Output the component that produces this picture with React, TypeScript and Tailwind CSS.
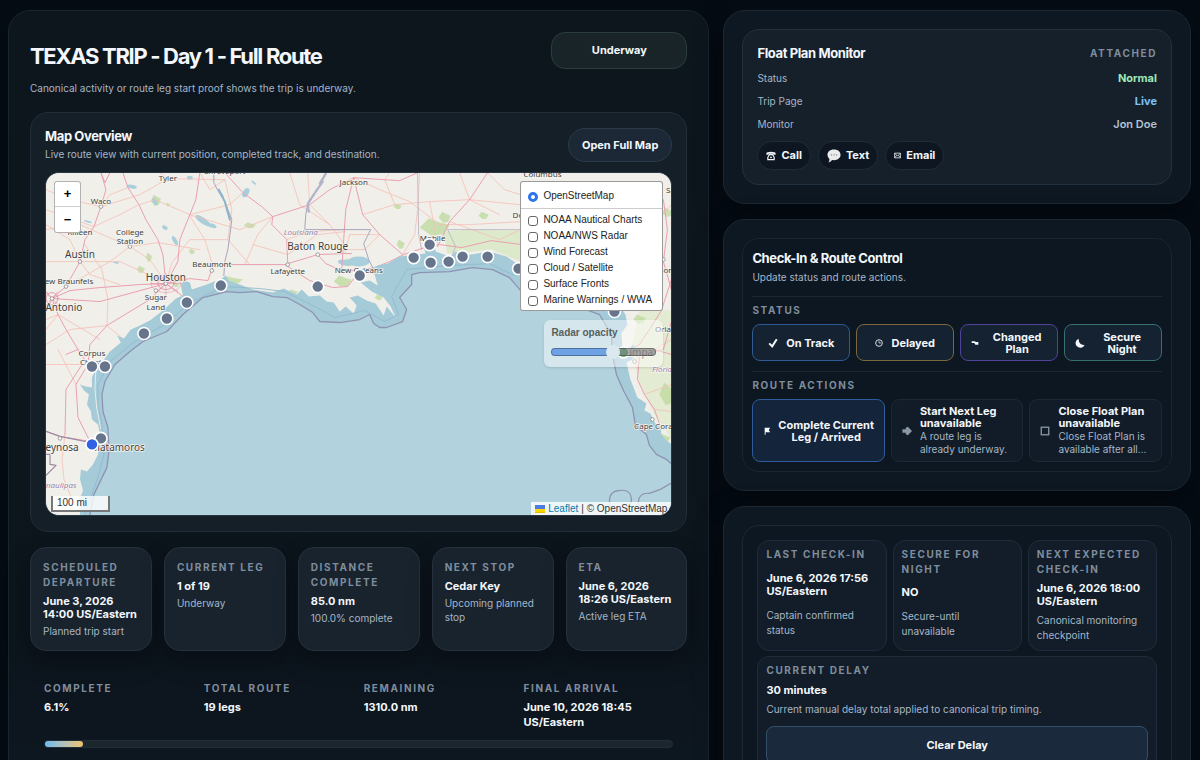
import React from "react";

const LABEL = "text-[10px] leading-[15px] font-bold uppercase tracking-[0.16em] text-[#7f8d9d]";
const MUTED = "text-[10px] text-[#a6b6c7]";

const stops: [number, number][] = [
  [430, 245], [414, 258], [431, 263], [449, 262], [463, 257], [488, 257], [519, 269], [615, 312],
  [360, 276], [318, 287], [221, 286], [187, 303], [167, 319], [144, 334], [105, 367], [92, 367], [101, 439],
];

type MapLabel = { t: string; x: number; y: number; s?: number; c?: string; i?: boolean };

const labels: MapLabel[] = [
  { t: "Tyler", x: 168, y: 181 },
  { t: "Shreveport", x: 225, y: 174 },
  { t: "Jackson", x: 354, y: 185 },
  { t: "Columbus", x: 543, y: 177 },
  { t: "Waco", x: 101, y: 204 },
  { t: "Killeen", x: 80, y: 235 },
  { t: "College", x: 130, y: 235 },
  { t: "Station", x: 130, y: 244 },
  { t: "Austin", x: 80, y: 258, s: 9 },
  { t: "New Braunfels", x: 66, y: 284 },
  { t: "San Antonio", x: 54, y: 311, s: 9 },
  { t: "Houston", x: 166, y: 281, s: 9 },
  { t: "Sugar", x: 156, y: 300 },
  { t: "Land", x: 156, y: 310 },
  { t: "Beaumont", x: 212, y: 267 },
  { t: "Louisiana", x: 301, y: 235, c: "#9a86ad", i: true },
  { t: "Baton Rouge", x: 318, y: 250, s: 9 },
  { t: "Lafayette", x: 288, y: 274 },
  { t: "New Orleans", x: 359, y: 273 },
  { t: "Mobile", x: 433, y: 241 },
  { t: "Dothan", x: 527, y: 218 },
  { t: "Savannah", x: 685, y: 193 },
  { t: "Jacksonville", x: 667, y: 273 },
  { t: "Orlando", x: 671, y: 332 },
  { t: "Tampa", x: 638, y: 357, s: 9 },
  { t: "Florida", x: 665, y: 373, c: "#9a86ad", i: true },
  { t: "Cape Coral", x: 655, y: 430 },
  { t: "Corpus", x: 92, y: 357 },
  { t: "Christi", x: 92, y: 366 },
  { t: "Reynosa", x: 59, y: 452, s: 9 },
  { t: "Matamoros", x: 118, y: 452, s: 9 },
  { t: "Tamaulipas", x: 56, y: 489, c: "#9a86ad", i: true },
];

const mainRoads = [
  "M101 173 L105 183 L110 173", "M123 173 L128 188 L139 205 L146 220 L158 240 L163 255 L166 283",
  "M101 173 L106 190 L101 207 L94 227 L85 240 L80 262 L66 287 L52 299",
  "M46 292 L52 299 L70 291 L100 288 L140 285 L166 284 L190 279 L208 281 L214 265 L245 265 L285 265 L318 255 L345 254 L352 254",
  "M285 265 L310 281 L333 288 L348 287 L358 274",
  "M318 255 L326 264 L342 271 L358 271 L375 268 L390 262 L404 255 L425 248 L440 245 L462 248 L492 241 L522 245",
  "M52 299 L58 315 L66 330 L78 350 L88 365", "M52 299 L46 312", "M166 284 L150 300 L130 312 L107 326 L90 345 L88 365",
  "M166 284 L178 262 L180 240 L190 215 L196 200 L200 173",
  "M273 217 L272 225 L287 240 L288 265", "M225 173 L243 193 L262 207 L273 217 L310 205 L330 190 L354 178 L400 181 L418 173",
  "M354 178 L346 210 L344 240 L342 271", "M354 178 L363 215 L380 235 L403 255", "M438 247 L450 222 L470 200 L488 173",
  "M78 350 L66 355 M88 365 L76 385 L78 418 L90 442 M82 365 L66 390 L65 435",
  "M46 432 L60 437 L90 442", "M166 284 L187 300", "M52 299 L100 302 L166 284",
  "M662 311 L650 330 L640 345 L628 352 M672 322 L664 350 L640 356 L638 380 L645 395 L655 410 L662 430 M672 355 L655 350",
  "M664 200 L668 230 L664 262 L672 290 M662 311 L672 280",
];

const minorRoads = [
  "M46 190 L70 200 L101 207 L140 195 L168 179 L225 180", "M46 230 L80 225 L130 247 L158 243 L200 250",
  "M140 205 L155 200 L190 215 L230 205 L243 193", "M189 215 L205 240 L212 263 M189 215 L240 230 L273 217",
  "M80 262 L120 262 L166 283 M80 262 L70 240 L46 225", "M66 287 L110 262 L130 247 L150 260 L166 283",
  "M46 262 L80 262 M107 326 L108 300 L102 270 L85 245", "M107 326 L130 345 M107 326 L70 330 L46 345",
  "M46 320 L58 315 L46 330 M58 315 L100 340 M46 365 L88 365 M58 350 L76 385 M65 435 L62 460 L64 480 L72 500",
  "M225 180 L232 210 L228 240 L250 265", "M245 265 L258 235 L273 217 M287 240 L310 232 L344 230", "M253 245 L288 255 L318 235 L345 232",
  "M308 173 L310 205 L330 225 L345 245", "M363 215 L395 205 L430 202 L470 200 L520 205", "M354 178 L380 190 L410 202 L440 225 L470 225 L521 222",
  "M380 235 L365 250 L345 250 M403 255 L415 235 L418 210 L420 173", "M430 202 L438 245 M450 222 L500 240 L521 230", "M395 205 L385 180 L390 173",
  "M460 173 L470 200 L500 215 M488 173 L505 190 L521 195", "M200 173 L210 190 L225 180 M168 179 L160 173", "M128 188 L110 195 L101 207 M139 205 L120 215 L94 227",
  "M166 284 L172 263 L190 240 L228 240", "M46 210 L60 215 L94 227 M80 262 L90 275 L120 285", "M345 254 L350 235 L380 235 M330 225 L300 205 L290 173",
  "M672 205 L664 215 M672 340 L655 350 L640 356 M645 395 L672 385 M655 410 L672 412",
];

const lakes: [number, number, number, number, number][] = [
  [203, 221, 9, 3, 35], [212, 226, 5, 2, 20], [175, 241, 5, 2, 60], [132, 187, 5, 2, 10], [62, 190, 3, 1, 10], [155, 202, 4, 2, 60],
  [190, 178, 3, 2, 0], [222, 195, 3, 1, 50], [246, 193, 3, 5, 30], [88, 222, 4, 1, 15], [165, 228, 3, 2, 30], [254, 183, 3, 1, 40],
  [75, 205, 3, 2, 45], [116, 263, 3, 1, 10], [345, 263, 7, 3, 10], [359, 262, 11, 5, 0],
];

const greens: [number, number, number, number][] = [
  [156, 201, 5, 6], [250, 226, 6, 3], [192, 252, 3, 3], [168, 205, 2, 2], [435, 228, 15, 9], [445, 218, 6, 6], [484, 216, 5, 4],
  [398, 207, 4, 3], [401, 245, 4, 5], [343, 282, 9, 6], [350, 263, 7, 4], [232, 281, 11, 4], [207, 289, 6, 3], [293, 293, 5, 3],
  [176, 285, 3, 3], [141, 270, 4, 4], [149, 258, 3, 5], [668, 395, 8, 12], [663, 440, 8, 7], [668, 213, 5, 5], [640, 320, 6, 5], [379, 298, 4, 3],
];

function CoastMap() {
  return (
    <svg className="block h-full w-full" viewBox="46 173 626 343" preserveAspectRatio="xMidYMid slice" role="img" aria-label="Gulf coast route map">
      <rect x="-200" y="0" width="1200" height="700" fill="#f1efe9" />
      <path d="M443 232 L472 230 L521 231 L521 262 L492 250 L465 253 L448 254Z" fill="#dde9cb" />
      <path d="M640 311 L672 311 L672 440 L655 415 L640 385 L632 350Z" fill="#e3ebd3" />
      {greens.map(([x, y, rx, ry], i) => (
        <path key={i} d={`M${x - rx} ${y} l${rx * 0.6} ${-ry} l${rx * 0.7} ${ry * 0.4} l${rx * 0.7} ${ry * 0.3} l${-rx * 0.4} ${ry} l${-rx * 0.8} ${ry * 0.2}Z`} fill="#bfdba1" opacity="0.8" />
      ))}
      {lakes.map(([x, y, rx, ry, r], i) => (
        <ellipse key={i} cx={x} cy={y} rx={rx} ry={ry} transform={`rotate(${r} ${x} ${y})`} fill="#a9cfdd" />
      ))}
      <g fill="none" strokeLinejoin="round" strokeLinecap="round">
        {minorRoads.map((d) => <path key={d} d={d} stroke="#f5bfb5" strokeWidth="0.8" />)}
        {mainRoads.map((d) => <path key={d} d={d} stroke="#ea9fb0" strokeWidth="1" />)}
        <g stroke="#e58fa5" strokeWidth="0.9">
          <ellipse cx="166" cy="284" rx="8" ry="6" />
          <ellipse cx="166" cy="284" rx="15" ry="9" opacity="0.6" />
          <ellipse cx="52" cy="299" rx="6" ry="6" />
          <path d="M151 284 H184 M166 274 V298 M155 277 L178 292 M178 276 L155 293 M46 293 L58 305 M58 292 L46 306" opacity="0.7" />
        </g>
        <path d="M214 173 V183 L218 191 L225 202 L232 220 L230 236 L228 250 L225 262 L224 276" stroke="#a9a4bd" strokeWidth="1" />
        <path d="M219 190 L225 202 L230 220" stroke="#8fb4c9" strokeWidth="2" />
        <path d="M327 173 L321 184 L314 195 L308 204 L306 215 L305 230 H371 L364 244 L369 260 L373 268" stroke="#a9a4bd" strokeWidth="1" />
        <path d="M326 174 L320 184 L323 182 L316 192 L308 204 L309 212" stroke="#b3b3ca" strokeWidth="2.4" strokeDasharray="4 2" />
        <path d="M418 173 L419 235 L422 250 M448 230 H521 M448 230 L456 247 L453 254" stroke="#bcb4c6" strokeWidth="0.9" />
        <path d="M46 432 L60 437 L90 443 L100 440 M46 455 L50 455 V465 L56 466 L46 476" stroke="#9d8aa5" strokeWidth="1.2" />
      </g>
      <path
        d="M80 530 L80 500 L83 491 L80 480 L81 470 L87 472 L93 465 L98 455 L101 438 L98 425 L92 420 L91 412 L87 405 L89 395 L84 391 L80 385 L86 387 L92 388 L92 378 L97 367 L104 360 L110 352 L121 343 L117 336 L124 339 L131 330 L140 326 L150 321 L163 311 L176 299 L183 296 L181 286 L184 281 L190 283 L192 290 L207 285 L222 279 L226 276 L229 281 L240 285 L253 290 L273 293 L284 289 L297 295 L302 290 L309 297 L320 296 L327 302 L334 303 L340 312 L346 307 L354 314 L357 306 L350 298 L358 296 L367 301 L376 304 L384 316 L387 307 L396 318 L391 307 L384 298 L372 292 L361 283 L370 281 L378 286 L375 275 L366 272 L378 266 L388 264 L400 257 L417 255 L426 254 L423 244 L428 238 L433 237 L436 252 L450 257 L456 252 L465 256 L490 252 L507 257 L523 268 L545 285 L575 275 L600 290 L620 305 L626 315 L628 325 L622 334 L623 348 L628 353 L633 345 L636 348 L633 360 L627 363 L631 380 L638 398 L647 404 L645 411 L651 414 L656 424 L661 428 L662 435 L668 442 L690 455 L690 530Z"
        fill="#a5cbd9"
      />
      <path
        d="M90 530 L90 515 L94 495 L107 468 L109 452 L108 428 L103 412 L102 395 L105 382 L115 365 L130 352 L143 342 L167 332 L183 315 L203 298 L227 292 L240 293 L257 292 L273 297 L287 298 L300 305 L313 313 L320 322 L340 323 L360 320 L370 315 L374 324 L380 328 L387 328 L403 322 L407 310 L400 298 L412 285 L412 275 L420 273 L450 272 L473 268 L493 270 L510 278 L522 292 L560 300 L600 315 L612 335 L613 355 L617 375 L624 391 L633 408 L636 426 L647 435 L650 446 L657 455 L667 460 L690 480 L690 530Z"
        fill="#b2d2de"
        stroke="#8f93b2"
        strokeWidth="1.3"
        strokeLinejoin="round"
      />
      <path d="M85 515 L98 478 L104 455 L102 425 L98 405 L98 385 L110 362 L135 342 L165 325 L190 303 L225 287 L260 289 L285 292 L315 307 L335 318 L365 311 L385 322 L399 315 L392 297 L407 270 L450 266 L490 264 L515 276" fill="none" stroke="#92b9ce" strokeWidth="0.9" />
      <g fill="none" stroke="#8f93b2" strokeWidth="1.2">
        <path d="M610 502 Q610 491 621 491 Q632 490 632 501 Q630 512 621 512 Q611 513 610 502Z" />
        <path d="M641 516 L639 502 Q640 493 650 494 L661 490 L675 482" />
      </g>
      <path d="M103 350 L96 367 L95 390 L97 410 L101 430" fill="none" stroke="#e9ece5" strokeWidth="1" />
      <g fill="#fff" stroke="#888" strokeWidth="0.8">
        {[[101, 207], [80, 262], [66, 287], [52, 299], [130, 247], [166, 284], [156, 291], [212, 271], [318, 255], [288, 265], [60, 439], [653, 420], [635, 362], [664, 260]].map(([x, y]) => (
          <circle key={`${x}-${y}`} cx={x} cy={y} r="1.8" />
        ))}
      </g>
      <g fontFamily='"Noto Sans", sans-serif' textAnchor="middle" stroke="#f6f4ef" strokeWidth="1.5" paintOrder="stroke">
        {labels.map((l) => (
          <text key={l.t} x={l.x} y={l.y} fontSize={l.s === 9 ? 10 : 8} fill={l.c ?? "#3f3f3f"} fontStyle={l.i ? "italic" : "normal"}>
            {l.t}
          </text>
        ))}
      </g>
      <g stroke="#fff" strokeWidth="1.6">
        {stops.map(([x, y]) => (
          <circle key={`${x}-${y}`} cx={x} cy={y} r="6" fill="#66748c" />
        ))}
        <circle cx="92" cy="445" r="6" fill="#2f62e4" />
        <circle cx="624" cy="353" r="5.5" fill="#0f8a35" />
      </g>
    </svg>
  );
}

const layers = ["NOAA Nautical Charts", "NOAA/NWS Radar", "Wind Forecast", "Cloud / Satellite", "Surface Fronts", "Marine Warnings / WWA"];

function MapPanel() {
  return (
    <div className="relative h-[344px] overflow-hidden rounded-[14px] border border-[#2a3743] bg-[#b2d2de] font-['Liberation_Sans',sans-serif] text-black">
      <CoastMap />
      <div className="absolute top-2 left-2 flex w-[27px] flex-col overflow-hidden rounded-[3px] border border-black/30 bg-white text-[13px] font-bold">
        <button className="h-[25px] border-b border-[#ccc]" aria-label="Zoom in">+</button>
        <button className="h-[25px]" aria-label="Zoom out">−</button>
      </div>
      <div className="absolute top-2 right-2 w-[143px] rounded-[3px] border border-black/40 bg-white pt-[6px] pb-[2px] text-[10px] leading-4 text-[#222]">
        <label className="flex items-center gap-[5px] px-[7px] pb-1">
          <input type="radio" name="base" defaultChecked className="mt-[2px] size-[10px] appearance-none rounded-full border-[3px] border-[#2f74e8] bg-white" />
          OpenStreetMap
        </label>
        <div className="mb-[3px] border-t border-[#ccc]" />
        {layers.map((l) => (
          <label key={l} className="flex items-center gap-[5px] px-[7px]">
            <input type="checkbox" className="mt-[2px] size-[10px] shrink-0 appearance-none rounded-[3px] border border-[#666] bg-white" />
            <span className="whitespace-nowrap">{l}</span>
          </label>
        ))}
      </div>
      <label className="absolute top-[147px] right-[8px] flex h-[47px] w-[119px] flex-col rounded-[6px] bg-white/45 px-[7px] pt-[5px] text-[10px] leading-4 font-bold text-[#55605f] shadow-sm">
        Radar opacity
        <input
          type="range"
          defaultValue={60}
          className="mt-[7px] h-2 w-full appearance-none rounded-full border border-black/30 bg-[linear-gradient(90deg,#6ea2e4_0,#6ea2e4_58%,#6a6a6a90_58%)] [&::-webkit-slider-thumb]:size-[14px] [&::-webkit-slider-thumb]:appearance-none [&::-webkit-slider-thumb]:rounded-full [&::-webkit-slider-thumb]:bg-[#dbe9ee]"
        />
      </label>
      <div className="absolute bottom-[3px] left-[5px] h-4 w-[59px] border-2 border-t-0 border-[#777] bg-white/80 px-1 text-[10px] leading-[14px] text-[#333]">100 mi</div>
      <div className="absolute right-0 bottom-0 flex h-[13px] items-center gap-[3px] bg-white/80 pr-1 pl-1 text-[10px] leading-[13px] text-[#333]">
        <svg width="10" height="8" viewBox="0 0 12 8" preserveAspectRatio="none" aria-hidden="true">
          <path fill="#4C7BE1" d="M0 0h12v4H0z" />
          <path fill="#FFD500" d="M0 4h12v3H0z" />
          <path fill="#E0BC00" d="M0 7h12v1H0z" />
        </svg>
        <a href="#leaflet" className="text-[#0078a8]">Leaflet</a>
        <span className="whitespace-nowrap">| © OpenStreetMap</span>
      </div>
    </div>
  );
}

const stats = [
  ["Scheduled Departure", "June 3, 2026 14:00 US/Eastern", "Planned trip start"],
  ["Current Leg", "1 of 19", "Underway"],
  ["Distance Complete", "85.0 nm", "100.0% complete"],
  ["Next Stop", "Cedar Key", "Upcoming planned stop"],
  ["ETA", "June 6, 2026 18:26 US/Eastern", "Active leg ETA"],
];

const metrics = [
  ["Complete", "6.1%"],
  ["Total Route", "19 legs"],
  ["Remaining", "1310.0 nm"],
  ["Final Arrival", "June 10, 2026 18:45 US/Eastern"],
];

const checkins = [
  ["Last Check-In", "June 6, 2026 17:56 US/Eastern", "Captain confirmed status"],
  ["Secure For Night", "NO", "Secure-until unavailable"],
  ["Next Expected Check-In", "June 6, 2026 18:00 US/Eastern", "Canonical monitoring checkpoint"],
];

const Icon = ({ children, size = 10 }: { children: React.ReactNode; size?: number }) => (
  <svg width={size} height={size} viewBox="0 0 12 12" className="shrink-0" aria-hidden="true">{children}</svg>
);

const phone = (
  <Icon>
    <path d="M0.5 4.4 V2.8 Q1 1 6 1 T11.5 2.8 V4.4 H8.8 V3.2 H3.2 V4.4Z" fill="currentColor" />
    <path d="M4 4.4 L2.2 7.6 V10.4 H9.8 V7.6 L8 4.4Z" fill="none" stroke="currentColor" strokeWidth="1.4" />
    <circle cx="6" cy="7.6" r="1.1" fill="currentColor" />
  </Icon>
);
const chat = (
  <Icon size={14}>
    <path d="M6 0.4 C9.4 0.4 11.6 2.3 11.6 5 S9.4 9.6 6 9.6 L4.4 9.5 Q3.3 11.2 1.2 11.5 Q2.3 10 2.1 8.6 Q0.4 7.3 0.4 5 C0.4 2.3 2.6 0.4 6 0.4Z" fill="#e9ebec" />
    <g fill="#777"><circle cx="3.8" cy="5" r="0.6" /><circle cx="6" cy="5" r="0.6" /><circle cx="8.2" cy="5" r="0.6" /></g>
  </Icon>
);
const mail = (
  <Icon size={7}>
    <path d="M1 2 H11 V10 H1Z M1 2 L6 7 L11 2 M1 10 L4.5 6 M11 10 L7.5 6" fill="none" stroke="currentColor" strokeWidth="1.3" />
  </Icon>
);

const contacts: [React.ReactNode, string][] = [[phone, "Call"], [chat, "Text"], [mail, "Email"]];

function StatusButton({ border, icon, children }: { border: string; icon: React.ReactNode; children: React.ReactNode }) {
  return (
    <button className={`flex h-[37px] items-center justify-center gap-2 rounded-[8px] border bg-[#152231] px-[10px] text-[11px] leading-[12px] font-bold text-[#f3f7fc] ${border}`}>
      {icon}
      {children}
    </button>
  );
}

function Panel({ children, inner }: { children: React.ReactNode; inner: string }) {
  return (
    <section className="rounded-[22px] border border-[#1b2732] bg-[#0e1822] p-[18px] shadow-[0_10px_30px_rgba(0,0,0,0.35)]">
      <div className={`rounded-[17px] border ${inner}`}>{children}</div>
    </section>
  );
}

export default function App() {
  return (
    <div className="h-screen overflow-hidden bg-[#050c14] font-['Inter',sans-serif] text-[#f3f7fc]">
      <main className="grid grid-cols-[3fr_2fr] items-start gap-[14px] pt-[10px] pr-[9px] pb-3 pl-2">
        <section className="min-w-0 rounded-[22px] border border-[#1a2530] bg-[linear-gradient(180deg,#0d151d,#0c141c_80%,#0e1821)] p-[21px] shadow-[0_10px_30px_rgba(0,0,0,0.35)]">
          <header className="mb-4 flex items-start justify-between">
            <div>
              <h1 className="pt-3 text-[22px] leading-6 font-bold tracking-[-0.06em]">TEXAS TRIP - Day 1 - Full Route</h1>
              <p className={`mt-3 leading-4 ${MUTED}`}>Canonical activity or route leg start proof shows the trip is underway.</p>
            </div>
            <div role="status" className="flex h-[37px] w-[136px] items-center justify-center rounded-[14px] border border-[#2a3d3c] bg-[#182428] text-[11px] font-bold">Underway</div>
          </header>

          <section className="rounded-[18px] border border-[#222e39] bg-[#151f28] px-[14px] py-[15px]">
            <div className="mb-[10px] flex items-start justify-between">
              <div>
                <h2 className="text-[13px] leading-4 font-bold tracking-[-0.03em]">Map Overview</h2>
                <p className={`mt-[2px] leading-4 ${MUTED}`}>Live route view with current position, completed track, and destination.</p>
              </div>
              <button className="h-[34px] rounded-full border border-[#2a3a4a] bg-[#1c2836] px-[13px] text-[11px] font-bold">Open Full Map</button>
            </div>
            <MapPanel />
          </section>

          <div className="mt-[15px] grid grid-cols-5 gap-3">
            {stats.map(([label, value, sub]) => (
              <article key={label} className="rounded-[16px] border border-[#25313c] bg-[#19232d] p-3 shadow-[0_10px_24px_rgba(0,0,0,0.3)]">
                <h3 className={LABEL}>{label}</h3>
                <p className="mt-[5px] text-[11px] leading-[13px] font-bold">{value}</p>
                <p className={`mt-[3px] leading-[14px] ${MUTED}`}>{sub}</p>
              </article>
            ))}
          </div>

          <div className="px-[14px] pt-[30px] pb-5">
            <div className="grid grid-cols-4 gap-[10px]">
              {metrics.map(([label, value]) => (
                <div key={label}>
                  <h3 className={LABEL}>{label}</h3>
                  <p className="mt-1 pr-4 text-[11px] leading-[15px] font-bold">{value}</p>
                </div>
              ))}
            </div>
            <div className="mt-[10px] h-2 rounded-full border border-[#222d35] bg-[#1c262d]">
              <div className="h-full w-[6.1%] rounded-full bg-linear-to-r from-[#6db9ee] to-[#efc36d]" />
            </div>
          </div>
        </section>

        <div className="flex min-w-0 flex-col gap-[15px]">
          <Panel inner="border-[#223140] bg-[#15202b] p-[14px]">
            <div className="flex items-center justify-between">
              <h2 className="text-[13px] leading-[18px] font-bold tracking-[-0.03em]">Float Plan Monitor</h2>
              <span className={LABEL}>Attached</span>
            </div>
            <dl className={`mt-2 flex flex-col gap-[7px] leading-4 ${MUTED}`}>
              <div className="flex justify-between"><dt>Status</dt><dd className="text-[11px] font-bold text-[#9fe8b8]">Normal</dd></div>
              <div className="flex justify-between"><dt>Trip Page</dt><dd className="text-[11px] font-bold text-[#7cc4fb]">Live</dd></div>
              <div className="flex justify-between"><dt>Monitor</dt><dd className="text-[11px] font-semibold text-[#b3c2d2]">Jon Doe</dd></div>
            </dl>
            <div className="mt-[9px] flex gap-[7px]">
              {contacts.map(([icon, name]) => (
                <button key={name} className="flex h-[29px] items-center gap-[5px] rounded-full border border-[#1f2c38] bg-[#0e1721] px-2 text-[11px] font-bold">
                  {icon}
                  {name}
                </button>
              ))}
            </div>
          </Panel>

          <Panel inner="border-[#192531] bg-[#0d1721] p-[9px]">
            <h2 className="text-[13px] leading-5 font-bold tracking-[-0.03em]">Check-In &amp; Route Control</h2>
            <p className={`mt-px leading-4 ${MUTED}`}>Update status and route actions.</p>
            <div className="mt-[11px] border-t border-[#1b2733] pt-[6px]">
              <h3 className={LABEL}>Status</h3>
              <div className="mt-[6px] grid grid-cols-4 gap-[6px]">
                <StatusButton border="border-[#2e5b93]" icon={<Icon><path d="M1.5 6.5 L5 10 L10.5 1.5" fill="none" stroke="currentColor" strokeWidth="2.4" /></Icon>}>On Track</StatusButton>
                <StatusButton border="border-[#7c673e]" icon={<Icon size={8}><circle cx="6" cy="6" r="5" fill="none" stroke="currentColor" strokeWidth="1.3" /><path d="M6 2.5V6H9" fill="none" stroke="currentColor" /></Icon>}>Delayed</StatusButton>
                <StatusButton border="border-[#51429a]" icon={<Icon size={8}><path d="M1 3.5 H6 L7 4.5 H11 V8.5 H6.5 L5 6 H1Z" fill="currentColor" /></Icon>}><span className="flex-1">Changed Plan</span></StatusButton>
                <StatusButton border="border-[#37716f]" icon={<Icon><path d="M4.5 0.8 A5.6 5.6 0 1 0 11.6 8 Q9 9 6.5 7 Q4 4.5 4.5 0.8Z" fill="currentColor" /></Icon>}><span className="flex-1">Secure Night</span></StatusButton>
              </div>
            </div>
            <div className="mt-[10px] border-t border-[#1b2733] pt-[6px]">
              <h3 className={LABEL}>Route Actions</h3>
              <div className="mt-[6px] grid grid-cols-3 gap-[6px]">
                <button className="flex h-[63px] items-center gap-1 rounded-[8px] border border-[#2e5b9b] bg-[#14243b] px-2 text-[11px] leading-[12px] font-bold">
                  <Icon size={11}><path d="M4 3 H10 L8.5 5.5 L10 8 H5 V10.5 H4Z" fill="currentColor" /></Icon>
                  <span className="flex-1">Complete Current Leg / Arrived</span>
                </button>
                <button disabled className="flex h-[63px] items-center gap-2 rounded-[8px] border border-[#1c2835] bg-[#111c28] px-[10px] text-left">
                  <span className="text-[#8996a4]"><Icon size={10}><path d="M0.5 4 H4.5 V2 L7 0.8 L12 6 L7 11.2 L4.5 10 V8 H0.5Z" fill="currentColor" /></Icon></span>
                  <span className="min-w-0">
                    <span className="block text-[11px] leading-[12px] font-bold">Start Next Leg unavailable</span>
                    <span className={`mt-px block leading-[13px] ${MUTED}`}>A route leg is already underway.</span>
                  </span>
                </button>
                <button disabled className="flex h-[63px] items-center gap-2 rounded-[8px] border border-[#1c2835] bg-[#111c28] px-[10px] text-left">
                  <span className="text-[#8996a4]"><Icon size={10}><rect x="1.5" y="1.5" width="9" height="9" fill="none" stroke="currentColor" strokeWidth="1.6" /></Icon></span>
                  <span className="min-w-0">
                    <span className="block text-[11px] leading-[12px] font-bold">Close Float Plan unavailable</span>
                    <span className={`mt-px block leading-[13px] ${MUTED}`}>Close Float Plan is available after all…</span>
                  </span>
                </button>
              </div>
            </div>
          </Panel>

          <Panel inner="border-[#1b2835] bg-[#0d1722] p-[14px]">
            <div className="grid grid-cols-3 gap-[6px]">
              {checkins.map(([label, value, sub]) => (
                <article key={label} className="grid gap-[5px] rounded-[12px] border border-[#1f2c3a] bg-[#121d29] px-2 pt-[6px] pb-[7px]">
                  <h3 className={LABEL}>{label}</h3>
                  <p className="text-[11px] leading-[13px] font-bold">{value}</p>
                  <p className={`leading-[15px] ${MUTED}`}>{sub}</p>
                </article>
              ))}
            </div>
            <article className="mt-[5px] rounded-[12px] border border-[#1f2c3a] bg-[#121d29] px-2 pt-[6px] pb-2">
              <h3 className={LABEL}>Current Delay</h3>
              <p className="mt-[5px] text-[11px] leading-[15px] font-bold">30 minutes</p>
              <p className={`mt-1 leading-[15px] ${MUTED}`}>Current manual delay total applied to canonical trip timing.</p>
              <button className="mt-[9px] h-[38px] w-full rounded-[8px] border border-[#335069] bg-[#1a2a3c] text-[11px] font-bold">Clear Delay</button>
            </article>
          </Panel>
        </div>
      </main>
    </div>
  );
}
